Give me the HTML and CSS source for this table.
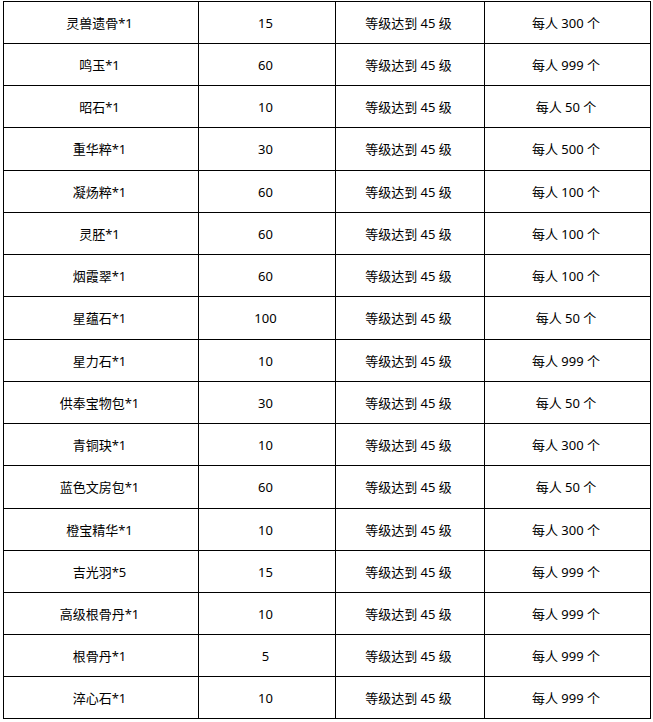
FILE: index.html
```html
<!DOCTYPE html>
<html lang="zh-CN">
<head>
<meta charset="utf-8">
<title>兑换表</title>
<link rel="stylesheet" href="styles.css">
</head>
<body>
<div class="table">
  <div class="cell">灵兽遗骨*1</div><div class="cell">15</div><div class="cell">等级达到 45 级</div><div class="cell">每人 300 个</div>
  <div class="cell">鸣玉*1</div><div class="cell">60</div><div class="cell">等级达到 45 级</div><div class="cell">每人 999 个</div>
  <div class="cell">昭石*1</div><div class="cell">10</div><div class="cell">等级达到 45 级</div><div class="cell">每人 50 个</div>
  <div class="cell">重华粹*1</div><div class="cell">30</div><div class="cell">等级达到 45 级</div><div class="cell">每人 500 个</div>
  <div class="cell">凝炀粹*1</div><div class="cell">60</div><div class="cell">等级达到 45 级</div><div class="cell">每人 100 个</div>
  <div class="cell">灵胚*1</div><div class="cell">60</div><div class="cell">等级达到 45 级</div><div class="cell">每人 100 个</div>
  <div class="cell">烟霞翠*1</div><div class="cell">60</div><div class="cell">等级达到 45 级</div><div class="cell">每人 100 个</div>
  <div class="cell">星蕴石*1</div><div class="cell">100</div><div class="cell">等级达到 45 级</div><div class="cell">每人 50 个</div>
  <div class="cell">星力石*1</div><div class="cell">10</div><div class="cell">等级达到 45 级</div><div class="cell">每人 999 个</div>
  <div class="cell">供奉宝物包*1</div><div class="cell">30</div><div class="cell">等级达到 45 级</div><div class="cell">每人 50 个</div>
  <div class="cell">青铜玦*1</div><div class="cell">10</div><div class="cell">等级达到 45 级</div><div class="cell">每人 300 个</div>
  <div class="cell">蓝色文房包*1</div><div class="cell">60</div><div class="cell">等级达到 45 级</div><div class="cell">每人 50 个</div>
  <div class="cell">橙宝精华*1</div><div class="cell">10</div><div class="cell">等级达到 45 级</div><div class="cell">每人 300 个</div>
  <div class="cell">吉光羽*5</div><div class="cell">15</div><div class="cell">等级达到 45 级</div><div class="cell">每人 999 个</div>
  <div class="cell">高级根骨丹*1</div><div class="cell">10</div><div class="cell">等级达到 45 级</div><div class="cell">每人 999 个</div>
  <div class="cell">根骨丹*1</div><div class="cell">5</div><div class="cell">等级达到 45 级</div><div class="cell">每人 999 个</div>
  <div class="cell">淬心石*1</div><div class="cell">10</div><div class="cell">等级达到 45 级</div><div class="cell">每人 999 个</div>
</div>
</body>
</html>
```

FILE: styles.css
```css
html, body {
  margin: 0;
  padding: 0;
  background: #ffffff;
}

body {
  font-family: "Noto Sans", "Noto Sans CJK SC", sans-serif;
  font-size: 13px;
  color: #000000;
}

.table {
  display: grid;
  grid-template-columns: 195px 137px 149px 166px;
  grid-template-rows: 42px 42px 42px 43px 42px 42px 42px 43px 42px 42px 42px 43px 42px 42px 42px 42px 42px;
  width: max-content;
  margin: 1px 0 0 3px;
  border-left: 1px solid #000;
  border-top: 1px solid #000;
}

.cell {
  display: flex;
  align-items: center;
  justify-content: center;
  padding: 1px 3px 0 0;
  border-right: 1px solid #000;
  border-bottom: 1px solid #000;
  white-space: nowrap;
  line-height: 1;
}
```
